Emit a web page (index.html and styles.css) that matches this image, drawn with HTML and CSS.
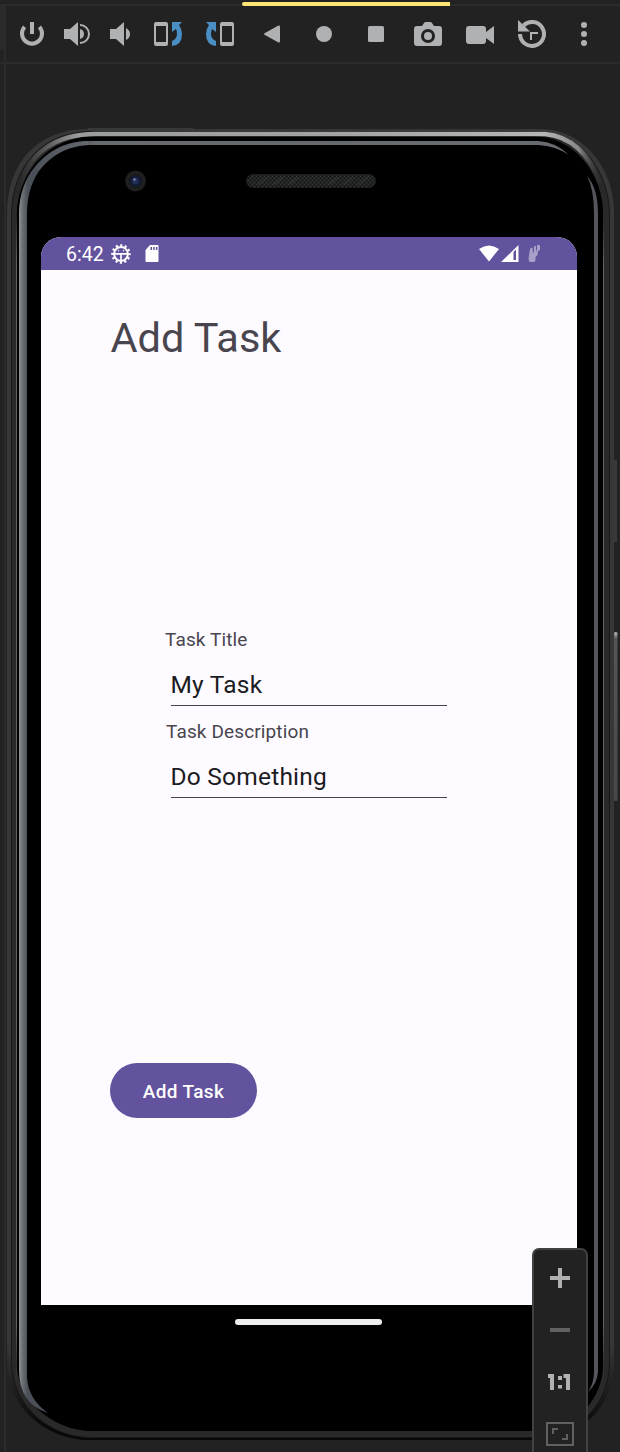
FILE: index.html
```html
<!DOCTYPE html>
<html lang="en">
<head>
<meta charset="utf-8">
<title>Emulator</title>
<link rel="stylesheet" href="styles.css">
</head>
<body>
<div class="emulator">
  <header class="toolbar">
    <svg class="tool" viewBox="0 0 28 28"><path d="M14 2v12" stroke="#afb1b3" stroke-width="4"/><path d="M6.600 6.900A10 10 0 1 0 21.400 6.900" fill="none" stroke="#afb1b3" stroke-width="4"/></svg>
    <svg class="tool" viewBox="0 0 28 28"><path d="M1 9h6l8-7v24l-8-7H1z"/><path d="M17 9q4 1 4 5t-4 5z"/><path d="M17 5a9 9 0 0 1 0 18" fill="none" stroke="#afb1b3" stroke-width="2"/></svg>
    <svg class="tool" viewBox="0 0 28 28"><path d="M3 9h6l8-7v24l-8-7H3zM19 8q4 2 4 6t-4 6z"/></svg>
    <svg class="tool" viewBox="0 0 28 28"><path fill-rule="evenodd" d="M2 2h10q2 0 2 2v20q0 2-2 2H2q-2 0-2-2V4q0-2 2-2zm0 4v16h10V6z"/><path class="blue" d="M18 2h10l-3 3q3 4 3 9 0 11-10 12v-5q5-2 5-7 0-3-1-5l-4 3z"/></svg>
    <svg class="tool" viewBox="0 0 28 28"><path fill-rule="evenodd" d="M16 2h10q2 0 2 2v20q0 2-2 2H16q-2 0-2-2V4q0-2 2-2zm0 4v16h10V6z"/><path class="blue" d="M10 2H0l3 3q-3 4-3 9 0 11 10 12v-5q-5-2-5-7 0-3 1-5l4 3z"/></svg>
    <svg class="tool" viewBox="0 0 28 28"><path d="M6.500 13.200 20 5.800q2-.8 2 1v14.400q0 1.800-2 1L6.500 14.800q-1-.8 0-1.600z"/></svg>
    <svg class="tool" viewBox="0 0 28 28"><circle cx="14" cy="14" r="8"/></svg>
    <svg class="tool" viewBox="0 0 28 28"><rect x="6" y="6" width="16" height="16" rx="1.500"/></svg>
    <svg class="tool" viewBox="0 0 28 28"><path fill-rule="evenodd" d="M3 6h5l2-3q.5-1 2-1h4q1.500 0 2 1l2 3h5q3 0 3 3v14q0 3-3 3H3q-3 0-3-3V9q0-3 3-3zm11 3a7 7 0 1 0 0 14 7 7 0 0 0 0-14z"/><circle cx="14" cy="16" r="4"/></svg>
    <svg class="tool" viewBox="0 0 28 28"><path d="M3 6h14q3 0 3 3v3l8-6v18l-8-6v3q0 3-3 3H3q-3 0-3-3V9q0-3 3-3z"/></svg>
    <svg class="tool" viewBox="0 0 28 28"><path d="M2 14A12 12 0 1 0 5.500 5.500" fill="none" stroke="#afb1b3" stroke-width="4"/><path d="M0 0v11.500h12z"/><path d="M13 20v-7h7" fill="none" stroke="#afb1b3" stroke-width="2"/></svg>
    <svg class="tool" viewBox="0 0 28 28"><circle cx="14" cy="5" r="3"/><circle cx="14" cy="14" r="3"/><circle cx="14" cy="23" r="3"/></svg>
  </header>

  <main class="device">
    <svg class="shell" viewBox="0 0 620 1388" aria-hidden="true">
      <defs>
        <linearGradient id="left" x1="19" x2="27.500" y1="0" y2="0" gradientUnits="userSpaceOnUse"><stop offset="0" stop-color="#929292"/><stop offset=".4" stop-color="#6c7076"/><stop offset="1" stop-color="#4b5058"/></linearGradient>
        <linearGradient id="top" x1="30" x2="95" y1="0" y2="0" gradientUnits="userSpaceOnUse"><stop offset="0" stop-color="#676b71" stop-opacity="0"/><stop offset="1" stop-color="#676a71"/></linearGradient>
        <linearGradient id="rim" x1="20" x2="602" y1="0" y2="0" gradientUnits="userSpaceOnUse"><stop offset="0" stop-color="#555" stop-opacity="0"/><stop offset=".04" stop-color="#555"/><stop offset=".1" stop-color="#9a9c9d"/><stop offset=".5" stop-color="#a0a2a4"/><stop offset=".9" stop-color="#b4b6b7"/><stop offset=".96" stop-color="#888"/><stop offset="1" stop-color="#444" stop-opacity="0"/></linearGradient>
        <linearGradient id="outer" x1="0" x2="0" y1="1280" y2="1365" gradientUnits="userSpaceOnUse"><stop offset="0" stop-color="#383737"/><stop offset="1" stop-color="#080808"/></linearGradient>
        <linearGradient id="hairline" x1="0" x2="0" y1="140" y2="1320" gradientUnits="userSpaceOnUse"><stop offset="0" stop-color="#606263" stop-opacity="0"/><stop offset=".05" stop-color="#606263"/><stop offset=".95" stop-color="#606263"/><stop offset="1" stop-color="#606263" stop-opacity="0"/></linearGradient>
        <linearGradient id="power" x1="0" x2="0" y1="0" y2="1"><stop offset="0" stop-color="#bbb"/><stop offset=".04" stop-color="#555"/><stop offset="1" stop-color="#484848"/></linearGradient>
        <pattern id="mesh" width="4" height="4" patternUnits="userSpaceOnUse"><path d="M0 0h4v4H0z" fill="#222423"/><path d="M0 0h1v1H0zM2 2h1v1H2z" fill="#343635"/><path d="M2 0h1v1H2zM0 2h1v1H0z" fill="#111"/></pattern>
      </defs>
      <path d="M7 150C7 98 38 65 88 65h452c40 0 74 35 74 85v1148c0 48-37 78-81 78H88c-38 0-81-30-81-78z" fill="url(#outer)"/>
      <path d="M11.500 152c0-51 32-84.500 80-84.500h446c38 0 72 35 72 84v1146c0 46-35 76-78 76H90c-38 0-78.500-30-78.500-76z" fill="#292929" stroke="#171717"/>
      <path d="M16.500 154c0-46 32-82 80-82h436c38 0 71 33 71 82v1143c0 42-31 70-72 70H92c-36 0-75.500-28-75.500-70z" fill="#000"/>
      <path d="M16 140h1v1180h-1zM603 140h1v1180h-1z" fill="url(#hairline)"/>
      <path d="M19 126C27 88 58 70 95 70h450c25 2 45 20 56 50" fill="none" stroke="url(#rim)" stroke-width="4.500"/>
      <path d="M19 150C19 130 26 113 34 104 44 91 62 77 88 77v4C65 82 50 93 39 107c-9 13-12 28-12 45v1161q1 22 21 36-29-9-29-43z" fill="url(#left)"/>
      <path d="M34 104C44 91 62 77 88 77h450q18 1 31 14-13-9-31-10H90c-26 1-41 13-51 26z" fill="url(#top)"/>
      <path d="M587 112q11 12 11 38v1158q-1 12-10 20 6-9 6-20V150q0-25-7-38z" fill="#55545b"/>
      <path d="M88 64.500h105" stroke="#383a39"/>
      <path d="M615.500 396v82" stroke="#393939" stroke-width="3"/>
      <rect x="614" y="568" width="3.500" height="169" rx="1.500" fill="url(#power)"/>
      <circle cx="135.500" cy="117" r="10.500" fill="#1c1c1d"/><circle cx="135.500" cy="117" r="8.500" fill="none" stroke="#262626"/><circle cx="135.500" cy="117" r="6" fill="#121a32"/><circle cx="135.500" cy="117" r="3.500" fill="#202d56"/><circle cx="134.500" cy="115.500" r="1.200" fill="#7986ae"/>
      <rect x="246.500" y="110.500" width="129" height="13" rx="6.500" fill="url(#mesh)" stroke="#1d1e1e"/>
      <path d="m258 121 10-8m5 8 10-8m5 8 10-8m30 8 10-8m5 8 10-8m5 8 10-8" stroke="#3a3d3b" stroke-width="2" opacity=".45"/>
    </svg>

    <section class="screen">
      <div class="status">
        <span class="clock">6:42</span>
        <svg class="gear" viewBox="0 0 20 20"><circle cx="10" cy="10" r="8.500" fill="none" stroke="#fff" stroke-width="2.600" stroke-dasharray="2.100 2.350" stroke-dashoffset="1.050"/><circle cx="10" cy="10" r="6.900" fill="none" stroke="#fff" stroke-width="2"/><path d="M4 9.800h12M10 10v7" stroke="#fff" stroke-width="1.700"/><circle cx="7.500" cy="6.800" r=".7"/><circle cx="12.500" cy="6.800" r=".7"/></svg>
        <svg class="card" viewBox="0 0 14 18"><path fill-rule="evenodd" d="M5 0h7.500q1 0 1 1v15q0 1-1 1h-11q-1 0-1-1V5zM5.500 2v3H7V2zm2.700 0v3h1.500V2zm2.700 0v3h1.500V2z"/></svg>
        <svg class="signals" viewBox="0 0 62 20"><path d="M0 5Q10-2 20 5L10 17.500zM22 18 39.500 1v17zm12.500-10V16H37V5.500z" fill-rule="evenodd"/><path d="m51.500 4 2-.5.500 6 1-2V2h2v6l1-3V1h3v5l-2 1-.5 4-2 2v3l-1 2h-5l-1-3 1-7z" opacity=".45"/></svg>
      </div>
      <div class="page">
        <h1 class="title">Add Task</h1>
        <form class="fields">
          <label class="label">Task Title</label>
          <div class="field">My Task</div>
          <label class="label second">Task Description</label>
          <div class="field">Do Something</div>
        </form>
        <button class="add">Add Task</button>
      </div>
    </section>
    <div class="home"></div>
  </main>

  <aside class="zoom">
    <svg viewBox="0 0 28 28"><path d="M4 12h8V4h4v8h8v4h-8v8h-4v-8H4z"/></svg>
    <svg viewBox="0 0 28 28"><path d="M4 12h20v4H4z" fill="#606162"/></svg>
    <svg viewBox="0 0 28 28"><path d="M2 6h6v16H4V10H2zM12 8h4v4h-4zm0 9h4v3.500h-4zm5.500-11H24v16h-4V10h-2.500z"/></svg>
    <svg viewBox="0 0 28 28"><g fill="none" stroke="#606162"><path d="M1 3h26v22H1z" stroke-width="2"/><path d="M7 14V9h5M21 14v5h-5" stroke-width="2"/></g></svg>
  </aside>
  <i class="edge"></i>
  <i class="tab"></i>
  <i class="progress"></i>
</div>
</body>
</html>
```
FILE: styles.css
```css
* { box-sizing: border-box; }
body { margin: 0; background: #222; font-family: Roboto, sans-serif; }
svg { display: block; fill: #afb1b3; }
.emulator { position: relative; width: 620px; height: 1452px; overflow: hidden; }
.edge { position: absolute; left: 4px; top: 4px; width: 2px; bottom: 0; background: #2b2b2b; }
.tab { position: absolute; left: 0; top: 5px; width: 4px; height: 45px; background: #2b2b2b; }
.progress { position: absolute; left: 242px; top: 2px; width: 208px; height: 4px; border-radius: 3px 0 0 3px; background: #ffe675; }

.toolbar {
  display: grid;
  grid-template-columns: 45px 44px 47px 52px 52px 52px 52px 52px 52px 52px 52px 28px;
  height: 60px;
  margin-top: 4px;
  padding: 14px 0 0 18px;
  border: solid #2b2b2b;
  border-width: 2px 0 0;
}
.tool { width: 28px; height: 28px; overflow: visible; }
.blue { fill: #4a8fc4; }

.device { position: relative; height: 1388px; padding: 173px 0 0 41px; box-shadow: 0 -2px #2b2b2b; }
.shell { position: absolute; left: 0; top: 0; width: 620px; height: 1388px; }
.screen { position: relative; width: 536px; height: 1068px; overflow: hidden; border-radius: 20px 20px 0 0; background: #fdfbff; }
.status { display: flex; height: 33px; padding: 0 36px 0 25px; align-items: center; background: #63529d; color: #fff; }
.status svg { fill: #fff; }
.clock { width: 45px; font-size: 19.500px; line-height: 33px; padding-top: 1px; }
.gear { width: 20px; height: 20px; }
.card { width: 14px; height: 18px; margin-left: 14px; }
.signals { width: 62px; height: 20px; margin-left: auto; overflow: visible; }

.page { display: flex; flex-direction: column; align-items: flex-start; padding: 44px 0 0 69.500px; }
.title { margin: 0; font-size: 41.500px; font-weight: 400; line-height: 48px; color: #49454f; }
.fields { display: block; width: 282px; margin: 266px 0 0 54.500px; }
.label { display: block; height: 24px; font-size: 19px; letter-spacing: .13px; line-height: 24px; color: #49454f; }
.second { margin: 14px 0 0 1px; }
.field { height: 41px; margin: 13px 0 0 5.500px; padding-top: 4px; border-bottom: 1px solid #49454f; font-size: 24.500px; letter-spacing: .22px; line-height: 32px; color: #1c1b1f; }
.add { width: 147px; height: 55px; margin: 265px 0 0 -.5px; padding: 1px 0 0; border: 0; border-radius: 28px; background: #63529d; color: #fff; font: 500 19px Roboto, sans-serif; letter-spacing: .35px; }
.home { position: relative; width: 147px; height: 6px; margin: 14px 0 0 194px; border-radius: 3px; background: #eee; }

.zoom {
  position: absolute; left: 532px; top: 1248px;
  display: grid; gap: 24px; width: 56px; height: 214px; padding: 14px 13px;
  border: 2px solid #414141; border-radius: 7px 7px 0 0; background: #222;
}
.zoom svg { width: 28px; height: 28px; margin: 0 -1px; }
```
